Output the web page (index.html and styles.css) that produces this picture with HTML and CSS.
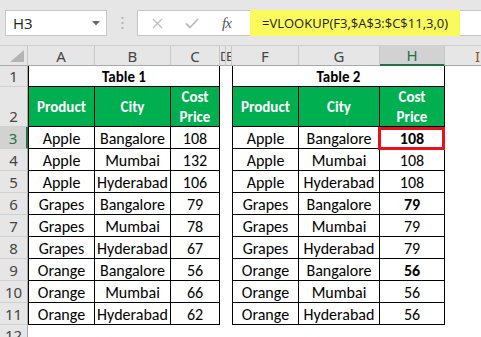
FILE: index.html
```html
<!DOCTYPE html>
<html>
<head>
<meta charset="utf-8">
<link rel="stylesheet" href="styles.css">
</head>
<body>
<div class="app">
  <div class="fbar">
    <div class="namebox">
      <span class="nb-text">H3</span>
      <svg class="nb-arrow" width="8" height="5" viewBox="0 0 8 5"><path d="M0 0H8L4 4.5Z" fill="#6a6a6a"/></svg>
    </div>
    <div class="sep">
      <svg width="3" height="12" viewBox="0 0 3 12"><rect x="0.5" y="0" width="2" height="2" fill="#b5b5b5"/><rect x="0.5" y="5" width="2" height="2" fill="#b5b5b5"/><rect x="0.5" y="10" width="2" height="2" fill="#b5b5b5"/></svg>
    </div>
    <div class="formula">
      <div class="ficons">
        <svg class="ic-x" width="11" height="11" viewBox="0 0 11 11"><path d="M1 1L10 10M10 1L1 10" stroke="#bdbdbd" stroke-width="1.3" fill="none"/></svg>
        <svg class="ic-ok" width="14" height="11" viewBox="0 0 14 11"><path d="M1 5.5L5 9.5L13 1" stroke="#bdbdbd" stroke-width="1.8" fill="none"/></svg>
        <span class="ic-fx">fx</span>
      </div>
      <div class="ftext">=VLOOKUP(F3,$A$3:$C$11,3,0)</div>
    </div>
  </div>

  <div class="sheet">
    <!-- column headers -->
    <div class="ch corner"><svg width="14" height="12" viewBox="0 0 14 12"><path d="M14 0V12H0Z" fill="#b4b4b4"/></svg></div>
    <div class="ch">A</div>
    <div class="ch">B</div>
    <div class="ch">C</div>
    <div class="ch narrow">D</div>
    <div class="ch narrow">E</div>
    <div class="ch">F</div>
    <div class="ch">G</div>
    <div class="ch active">H</div>
    <div class="ch last">I</div>

    <!-- row 1 -->
    <div class="rh">1</div>
    <div class="title first span3">Table 1</div>
    <div class="e"></div><div class="e"></div>
    <div class="title first span3">Table 2</div>
    <div class="e"></div>

    <!-- row 2 -->
    <div class="rh bottom">2</div>
    <div class="hd first">Product</div><div class="hd">City</div><div class="hd">Cost<br>Price</div>
    <div class="e"></div><div class="e"></div>
    <div class="hd first">Product</div><div class="hd">City</div><div class="hd">Cost<br>Price</div>
    <div class="e"></div>

    <!-- row 3 -->
    <div class="rh active">3</div>
    <div class="c first">Apple</div><div class="c">Bangalore</div><div class="c">108</div>
    <div class="e"></div><div class="e"></div>
    <div class="c first">Apple</div><div class="c">Bangalore</div><div class="c b sel">108</div>
    <div class="e"></div>

    <!-- row 4 -->
    <div class="rh">4</div>
    <div class="c first">Apple</div><div class="c">Mumbai</div><div class="c">132</div>
    <div class="e"></div><div class="e"></div>
    <div class="c first">Apple</div><div class="c">Mumbai</div><div class="c">108</div>
    <div class="e"></div>

    <!-- row 5 -->
    <div class="rh">5</div>
    <div class="c first">Apple</div><div class="c">Hyderabad</div><div class="c">106</div>
    <div class="e"></div><div class="e"></div>
    <div class="c first">Apple</div><div class="c">Hyderabad</div><div class="c">108</div>
    <div class="e"></div>

    <!-- row 6 -->
    <div class="rh">6</div>
    <div class="c first">Grapes</div><div class="c">Bangalore</div><div class="c">79</div>
    <div class="e"></div><div class="e"></div>
    <div class="c first">Grapes</div><div class="c">Bangalore</div><div class="c b">79</div>
    <div class="e"></div>

    <!-- row 7 -->
    <div class="rh">7</div>
    <div class="c first">Grapes</div><div class="c">Mumbai</div><div class="c">78</div>
    <div class="e"></div><div class="e"></div>
    <div class="c first">Grapes</div><div class="c">Mumbai</div><div class="c">79</div>
    <div class="e"></div>

    <!-- row 8 -->
    <div class="rh">8</div>
    <div class="c first">Grapes</div><div class="c">Hyderabad</div><div class="c">67</div>
    <div class="e"></div><div class="e"></div>
    <div class="c first">Grapes</div><div class="c">Hyderabad</div><div class="c">79</div>
    <div class="e"></div>

    <!-- row 9 -->
    <div class="rh">9</div>
    <div class="c first">Orange</div><div class="c">Bangalore</div><div class="c">56</div>
    <div class="e"></div><div class="e"></div>
    <div class="c first">Orange</div><div class="c">Bangalore</div><div class="c b">56</div>
    <div class="e"></div>

    <!-- row 10 -->
    <div class="rh">10</div>
    <div class="c first">Orange</div><div class="c">Mumbai</div><div class="c">66</div>
    <div class="e"></div><div class="e"></div>
    <div class="c first">Orange</div><div class="c">Mumbai</div><div class="c">56</div>
    <div class="e"></div>

    <!-- row 11 -->
    <div class="rh">11</div>
    <div class="c first">Orange</div><div class="c">Hyderabad</div><div class="c">62</div>
    <div class="e"></div><div class="e"></div>
    <div class="c first">Orange</div><div class="c">Hyderabad</div><div class="c">56</div>
    <div class="e"></div>

    <!-- row 12 -->
    <div class="rh top">12</div>
  </div>
</div>
</body>
</html>
```

FILE: styles.css
```css
* { box-sizing: border-box; }
html, body { margin: 0; padding: 0; }
body {
  width: 481px;
  height: 337px;
  overflow: hidden;
  background: #fff;
  font-family: Carlito, Lato, "Noto Sans", sans-serif;
}
.app { width: 481px; height: 337px; overflow: hidden; display: flex; flex-direction: column; }

/* formula bar */
.fbar {
  height: 46px;
  flex: none;
  background: #e6e6e6;
  border-bottom: 1px solid #d0d0d0;
  display: flex;
  align-items: flex-start;
  padding-top: 10px;
  padding-left: 5px;
}
.namebox {
  width: 102px;
  height: 26px;
  background: #fff;
  border: 1px solid #c6c6c6;
  display: flex;
  align-items: center;
  justify-content: space-between;
  padding: 0 6px 0 7px;
}
.nb-text {
  font-family: "Open Sans", "Noto Sans", sans-serif;
  font-size: 15px;
  color: #222;
}
.sep {
  width: 30px;
  height: 26px;
  display: flex;
  align-items: center;
  justify-content: center;
}
.formula {
  flex: 1;
  height: 26px;
  background: #fff;
  border: 1px solid #c6c6c6;
  border-right: none;
  display: flex;
}
.ficons {
  width: 112px;
  display: flex;
  align-items: center;
  padding-left: 14px;
}
.ic-x { margin-right: 22px; }
.ic-ok { margin-right: 23px; }
.ic-fx {
  font-family: "Liberation Serif", serif;
  font-style: italic;
  font-size: 15px;
  color: #555;
  letter-spacing: -1px;
}
.ftext {
  width: 210px;
  margin-top: -1px;
  margin-bottom: -1px;
  background: #fafa5c;
  display: flex;
  align-items: center;
  padding-left: 12px;
  font-family: "Open Sans", "Noto Sans", sans-serif;
  font-size: 13px;
  color: #222;
  white-space: nowrap;
}

/* sheet grid */
.sheet {
  flex: 1;
  display: grid;
  grid-template-columns: 28px 67px 76px 49px 6px 6px 67px 81px 65px 64px;
  grid-template-rows: 20px 21px 40px repeat(9, 22px) 1fr;
  overflow: hidden;
  width: 509px;
}
.ch {
  background: #e6e6e6;
  border-right: 1px solid #c8c8c8;
  border-bottom: 1px solid #a8a8a8;
  display: flex;
  align-items: center;
  justify-content: center;
  font-family: "Noto Sans", sans-serif;
  font-size: 15px;
  color: #444;
  overflow: hidden;
}
.ch.narrow { font-size: 13px; justify-content: flex-start; letter-spacing: -2px; }
.ch.last { justify-content: flex-start; padding-left: 30px; color: #8a5a1a; }
.ch.corner { justify-content: flex-end; align-items: flex-end; padding: 0 3px 3px 0; }
.ch.active {
  background: #d2d2d2;
  border-bottom: 2px solid #217346;
  color: #217346;
}
.rh {
  grid-column: 1;
  background: #e6e6e6;
  border-right: 1px solid #a8a8a8;
  border-bottom: 1px solid #d0d0d0;
  display: flex;
  align-items: center;
  justify-content: center;
  font-family: "Noto Sans", sans-serif;
  font-size: 15px;
  color: #444;
}
.rh.bottom { align-items: flex-end; padding-bottom: 0; }
.rh.top { align-items: flex-start; }
.rh.active {
  background: #d2d2d2;
  border-right: 2px solid #217346;
  color: #217346;
}
.e { background: #fff; }

.title, .hd, .c {
  border-right: 1px solid #000;
  border-bottom: 1px solid #000;
  display: flex;
  align-items: center;
  justify-content: center;
  text-align: center;
  font-size: 15px;
  color: #000;
  white-space: nowrap;
}
.first { border-left: 1px solid #000; }
.span3 { grid-column: span 3; }
.title { font-weight: 700; padding-top: 1px; }
.hd {
  background: #00b050;
  color: #fff;
  font-weight: 700;
  line-height: 20px;
}
.c { padding-top: 2px; font-size: 16px; }
.b { font-weight: 700; }
.sel { position: relative; }
.sel::after {
  content: "";
  position: absolute;
  left: -2px;
  right: -1px;
  top: 0;
  bottom: -2px;
  border: 3px solid #e8121b;
}
```
